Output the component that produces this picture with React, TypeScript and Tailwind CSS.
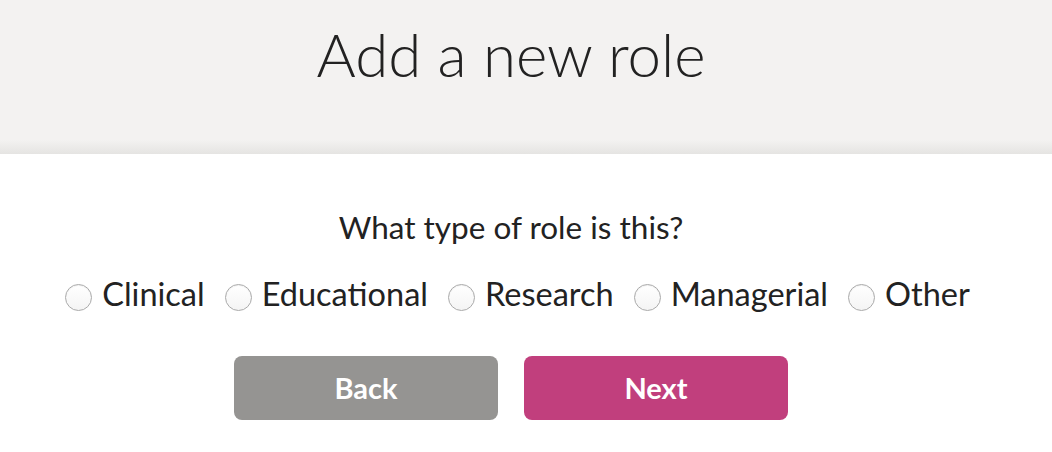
import React from "react";

const options = ["Clinical", "Educational", "Research", "Managerial", "Other"];

function Radio() {
  return (
    <span className="inline-block w-[27px] h-[27px] rounded-full border border-[#aaaaaa] bg-gradient-to-b from-[#ffffff] to-[#f4f4f4] shadow-[inset_0_1px_1px_rgba(0,0,0,0.06)] shrink-0" />
  );
}

export default function App() {
  return (
    <div className="w-[1052px] h-[452px] bg-white text-[#222] font-['Lato',sans-serif]">
      <div className="h-[154px] bg-[#f3f2f1] relative flex justify-center pr-[30px]">
        <h1 className="text-[60px] font-light leading-none mt-[24px]">Add a new role</h1>
        <div className="absolute left-0 right-0 bottom-0 h-[14px] bg-gradient-to-b from-[#f3f2f1] to-[#e5e4e2]" />
      </div>
      <div className="flex flex-col items-center pr-[30px]">
        <p className="text-[31.5px] mt-[58px] leading-none">What type of role is this?</p>
        <div className="flex items-center mt-[34px] ml-[13px]">
          {options.map((o, i) => (
            <label key={o} className={`flex items-center ${i < options.length - 1 ? "mr-[20px]" : ""}`}>
              <span className="mt-[6px] flex"><Radio /></span>
              <span className="ml-[10px] text-[32.5px] leading-none">{o}</span>
            </label>
          ))}
        </div>
        <div className="flex gap-[26px] mt-[45px]">
          <button className="w-[264px] h-[64px] rounded-[8px] bg-[#959492] text-white text-[29px] font-bold">Back</button>
          <button className="w-[264px] h-[64px] rounded-[8px] bg-[#c13f7d] text-white text-[29px] font-bold">Next</button>
        </div>
      </div>
    </div>
  );
}
